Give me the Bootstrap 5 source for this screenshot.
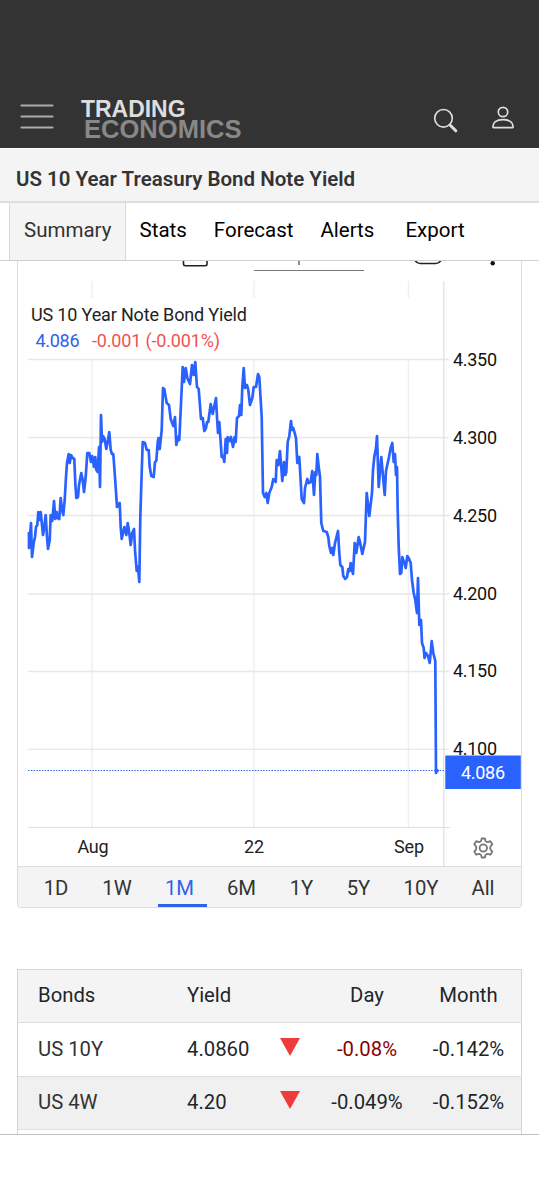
<!DOCTYPE html>
<html lang="en">
<head>
<meta charset="utf-8">
<meta name="viewport" content="width=device-width, initial-scale=1">
<title>US 10 Year Treasury Bond Note Yield</title>
<link href="https://cdn.jsdelivr.net/npm/bootstrap@5.3.0/dist/css/bootstrap.min.css" rel="stylesheet">
<style>
body{font-family:Roboto,"Liberation Sans",sans-serif;font-size:20px;line-height:24px;color:#212529;background:#fff;height:1200px;overflow:hidden}
.site-head{height:148px;background:#333;padding:0 24px 0 20px}
.brand{font-family:"Liberation Sans",sans-serif;font-weight:700}
.page-title{height:55px;background:#f4f4f4;border-top:1px solid #fff;border-bottom:2px solid #dedede;padding:9px 0 0 16px;font-size:20.5px;font-weight:600;color:#333;margin:0}
.tabs{height:58px;border-bottom:1px solid #d0d0d0;padding-left:9px;font-size:20.5px}
.tabs a{color:#000;text-decoration:none;height:57px;padding:0 13.500px 3px;white-space:nowrap}
.tabs a.current{width:117px;background:#f4f4f4;color:#333;border:solid #d8d8d8;border-width:0 1px;padding:0 14px 3px}
.chart-card{margin:0 17px;width:505px;height:647px;border:1px solid #dcdcdc;border-top:0;border-radius:0 0 4px 4px;overflow:hidden}
.chart-card svg{display:block}
.ranges{display:grid;grid-template-columns:62px 60px 65px 59px 61px 53px 72px 52px;height:41px;background:#f4f4f4;border-top:1px solid #dcdcdc;padding-left:7px;font-size:20.3px}
.ranges span{justify-self:center;padding-top:9px;height:40px;text-align:center;color:#333}
.ranges .on{color:#2f62e8;width:49px;border-bottom:3px solid #2f62e8;height:40px;justify-self:end;margin-right:5px;padding-right:6px}
.bonds-wrap{margin:61px 17px 0;height:165px;width:505px;overflow:hidden}
.bonds{width:505px;table-layout:fixed;border:1px solid #d3d4d7;border-collapse:separate;border-spacing:0;margin:0;font-size:20.3px}
.bonds th,.bonds td{height:53.4px;padding:0 0 2px;font-weight:400;border-bottom:1px solid #dcdde0;vertical-align:middle}
.bonds th:first-child,.bonds td:first-child{padding-left:20px}
.bonds td:first-child{color:#333}
.bonds th{background:#f4f4f5}.bonds .alt td{background:#f0f0f1;padding-bottom:1px}
.bonds svg{display:block;margin:-4px 0 0 93px}
.bottom-rule{height:1px;background:#bfbfc1}
</style>
</head>
<body>
<header class="site-head">
<svg width="499" height="148" viewBox="20 0 499 148" fill="none">
<path d="M21.500 105.500H52.500M21.500 116.500H52.500M21.500 127.500H52.500" stroke="#acacac" stroke-width="2.200" stroke-linecap="round"/>
<text class="brand" x="81" y="116.700" font-size="24" fill="#dedede" textLength="104.500" lengthAdjust="spacingAndGlyphs">TRADING</text>
<text class="brand" x="84" y="137.700" font-size="26.300" fill="#888" textLength="157.500" lengthAdjust="spacingAndGlyphs">ECONOMICS</text>
<circle cx="443.500" cy="118.300" r="8.800" stroke="#dedede" stroke-width="1.600"/>
<path d="M450 125L455.800 130.800" stroke="#dedede" stroke-width="3" stroke-linecap="round"/>
<g stroke="#dedede" stroke-width="1.700"><circle cx="503" cy="112" r="4.700"/><path d="M493 127.200C492.500 122.500 496.500 119.700 503 119.700S513.500 122.500 513 127.200Q512.900 127.600 512.300 127.600H493.700Q493.100 127.600 493 127.200Z"/></g>
</svg>
</header>
<h1 class="page-title d-flex align-items-center"><span>US 10 Year Treasury Bond Note Yield</span></h1>
<nav class="tabs d-flex">
<a class="current d-flex align-items-center" href="#">Summary</a>
<a class="d-flex align-items-center" href="#">Stats</a>
<a class="d-flex align-items-center" href="#">Forecast</a>
<a class="d-flex align-items-center" href="#">Alerts</a>
<a class="d-flex align-items-center ms-1" href="#">Export</a>
</nav>
<main>
<section class="chart-card">
<svg width="503" height="605" viewBox="18 261 503 605" fill="none">
<g stroke="#222" stroke-width="1.600"><path d="M183.500 260V264Q183.500 265.700 185.500 265.700H205Q207 265.700 207 264V260"/><path d="M414.500 260Q417 263.500 420 263.500H436Q439 263.500 441.500 260"/></g>
<path d="M254 270.500H364" stroke="#777"/><path d="M299 261V265" stroke="#666" stroke-width="1.500"/><circle cx="492.700" cy="263.300" r="2.200" fill="#111"/>
<path d="M92 281V298M92 360V827M254 281V298M254 360V827M408.500 281V298M408.500 360V827" stroke="#edf0f3" stroke-width="1.500"/>
<path d="M28 359.500H449M28 437.500H449M28 515.500H449M28 594H449M28 671.500H449M28 749.300H449" stroke="#e8e8e9" stroke-width="1.300"/>
<path d="M28 827.500H450M443.800 281V866" stroke="#dfdfe0" stroke-width="1.200"/>
<path d="M28 770.500H444" stroke="#2f62e8" stroke-width="1.200" stroke-dasharray="1.400 1.400"/>
<path stroke="#2962ff" stroke-width="2.700" stroke-linejoin="round" d="M29 532L29 548 31 523 32 557 33.700 543 35 537 36 527 37.300 525 38.300 512 39.300 520 40.700 512 42 525 43 535 44.300 527 45.700 515 47 537 48 549 49.700 540 50.700 515 52.300 521 54 501 55.300 519 56.700 512 57.700 518 59.300 519 60.700 498 62 510 63.300 515 64.700 500 66 477 67 463 68.700 454 69.700 463 71 455 72.700 458 74.300 459 75.300 483 76.300 498 78 497 79 485 81.300 473 82.700 480 84 492 85.700 477 87.300 453 89.300 453 91 462 92.300 456 94 467 95.300 457 96.300 470 97.700 472 99 447 100 487 101 415 102 442 103 436 104.700 439 106.300 449 108 440 109.300 432 110.700 450 112 454 113.300 454 115 477 117 507 119.700 503 120.700 527 121.700 539 124.300 527 126.300 535 127.700 523 129.300 533 130.700 545 132.300 533 134 529 135 550 136.700 571 138 567 139.300 582 140.300 517 141.300 485 142.700 442 145 443 146.700 450 148.700 450 149.700 467 151.300 476 153.700 477 155 462 156.300 461 157.700 442 158.500 438 159.700 449 161.700 430 163 388 164.300 389 166.700 403 169 405 170.700 419 173.300 426 175 417 176.300 445 178.300 437 179.300 440 180.700 410 182.700 367 184 382 185.700 368 187.300 378 190 384 192 365 193.700 375 195.300 362 197 387 198.700 389 201 419 202.700 418 204.300 431 206 428 207 422 208.300 422 210.700 404 212.700 414 216 398 217 417 218 433 219.300 422 221.700 457 223 456 224.300 462 225.700 439 227 453 227.700 437 230 441 231 437 233 447 234.700 437 235.700 442 237 418 239 416 240 405 241.300 415 242.300 387 243.700 368 245 388 247 385 248.300 390 250 405 252.300 398 253.700 387 256 387 258 374 259.300 377 260.700 400 261.700 417 263 493 264.700 497 266.300 493 267.700 503 269.300 493 271.700 487 273.300 479 275.700 482 276.700 460 278.300 465 280 451 282.300 481 284 462 285.300 475 286.300 472 287.700 442 289.300 436 291 421 292 430 293.300 428 296 438 297.300 463 299.300 457 301.700 499 304 503 305 488 307.300 479 308.700 483 310.700 482 312.300 471 314 495 315.300 472 316.300 475 317.300 454 318.700 467 320 477 321.300 523 323.300 531 326.700 532 328.300 537 329.300 546 331 553 332.300 548 333.300 555 335 543 338 531 339.300 553 340.300 565 342.300 567 343.300 576 345.300 579 347 577 348.300 569 349.700 571 350.700 563 353 574 354.700 543 356.300 553 358.700 537 360 542 362.300 554 365 542 366.700 493 369.300 516 372 493 373 470 374.300 457 376 448 377 436 378.700 487 381.300 457 384.700 495 386 471 389 457 390.700 448 392.300 443 393.700 462 395 454 396 475 397 467 397.700 510 398.700 547 400 574 401.300 573 402.300 557 404 562 405.700 568 407.300 556 408.700 558 410.700 563 412 580 413.700 593 415.300 600 417 613 418 578 419.300 625 421 620 422 643 423.700 648 424.500 658 426 653 428 656 429.700 663 431.700 641 433.300 653 435.300 661 436 773 437.500 770"/>
<circle cx="437" cy="770.500" r="1.800" fill="#2962ff"/>
<g fill="#111" font-size="18">
<text x="31" y="321" fill="#222" textLength="216">US 10 Year Note Bond Yield</text>
<text x="35.500" y="347" fill="#2f62e8" textLength="44">4.086</text>
<text x="92" y="347" fill="#ef5350" textLength="128">-0.001 (-0.001%)</text>
<text x="453" y="366" textLength="44">4.350</text><text x="453" y="443.500" textLength="44">4.300</text><text x="453" y="521.500" textLength="44">4.250</text><text x="453" y="599.500" textLength="44">4.200</text><text x="453" y="677" textLength="44">4.150</text><text x="453" y="754.500" textLength="44">4.100</text>
<text x="77.500" y="852.500" fill="#222" textLength="31">Aug</text><text x="244" y="852.500" fill="#222" textLength="20">22</text><text x="394" y="852.500" fill="#222" textLength="30">Sep</text>
<rect x="445.300" y="755.500" width="75.500" height="33.500" fill="#2962ff"/>
<text x="461" y="779" fill="#fff" textLength="44">4.086</text>
</g>
<g stroke="#777" stroke-width="1.800" stroke-linejoin="round"><circle cx="483.300" cy="848" r="3.700"/><path d="M481.700 838.500h3.200l.7 2.800 2 .9 2.800-1 1.900 3.100-1.900 2.200v2.900l1.900 2.200-1.900 3.100-2.800-.9-2 1-.7 2.700h-3.200l-.7-2.700-2-1-2.800.9-1.900-3.100 1.900-2.200v-2.900l-1.900-2.200 1.900-3.100 2.800 1 2-.9z"/></g>
</svg>
<div class="ranges"><span>1D</span><span>1W</span><span class="on">1M</span><span>6M</span><span>1Y</span><span>5Y</span><span>10Y</span><span>All</span></div>
</section>
<div class="bonds-wrap">
<table class="bonds">
<colgroup><col style="width:169px"><col style="width:73px"><col style="width:58px"><col style="width:98px"><col style="width:105px"></colgroup>
<tr><th>Bonds</th><th colspan="2">Yield</th><th class="text-center">Day</th><th class="text-center">Month</th></tr>
<tr><td>US 10Y</td><td colspan="2"><div class="d-flex align-items-center"><span style="width:0">4.0860</span><svg width="20" height="18"><path d="M0 0H20L10 18Z" fill="#ef3b3b"/></svg></div></td><td class="text-center" style="color:#8b0000">-0.08%</td><td class="text-center">-0.142%</td></tr>
<tr class="alt"><td>US 4W</td><td colspan="2"><div class="d-flex align-items-center"><span style="width:0">4.20</span><svg width="20" height="18"><path d="M0 0H20L10 18Z" fill="#ef3b3b"/></svg></div></td><td class="text-center">-0.049%</td><td class="text-center">-0.152%</td></tr>
<tr><td colspan="5"></td></tr>
</table>
</div>
<div class="bottom-rule"></div>
</main>
<script src="https://cdn.jsdelivr.net/npm/bootstrap@5.3.0/dist/js/bootstrap.bundle.min.js"></script>
</body>
</html>
